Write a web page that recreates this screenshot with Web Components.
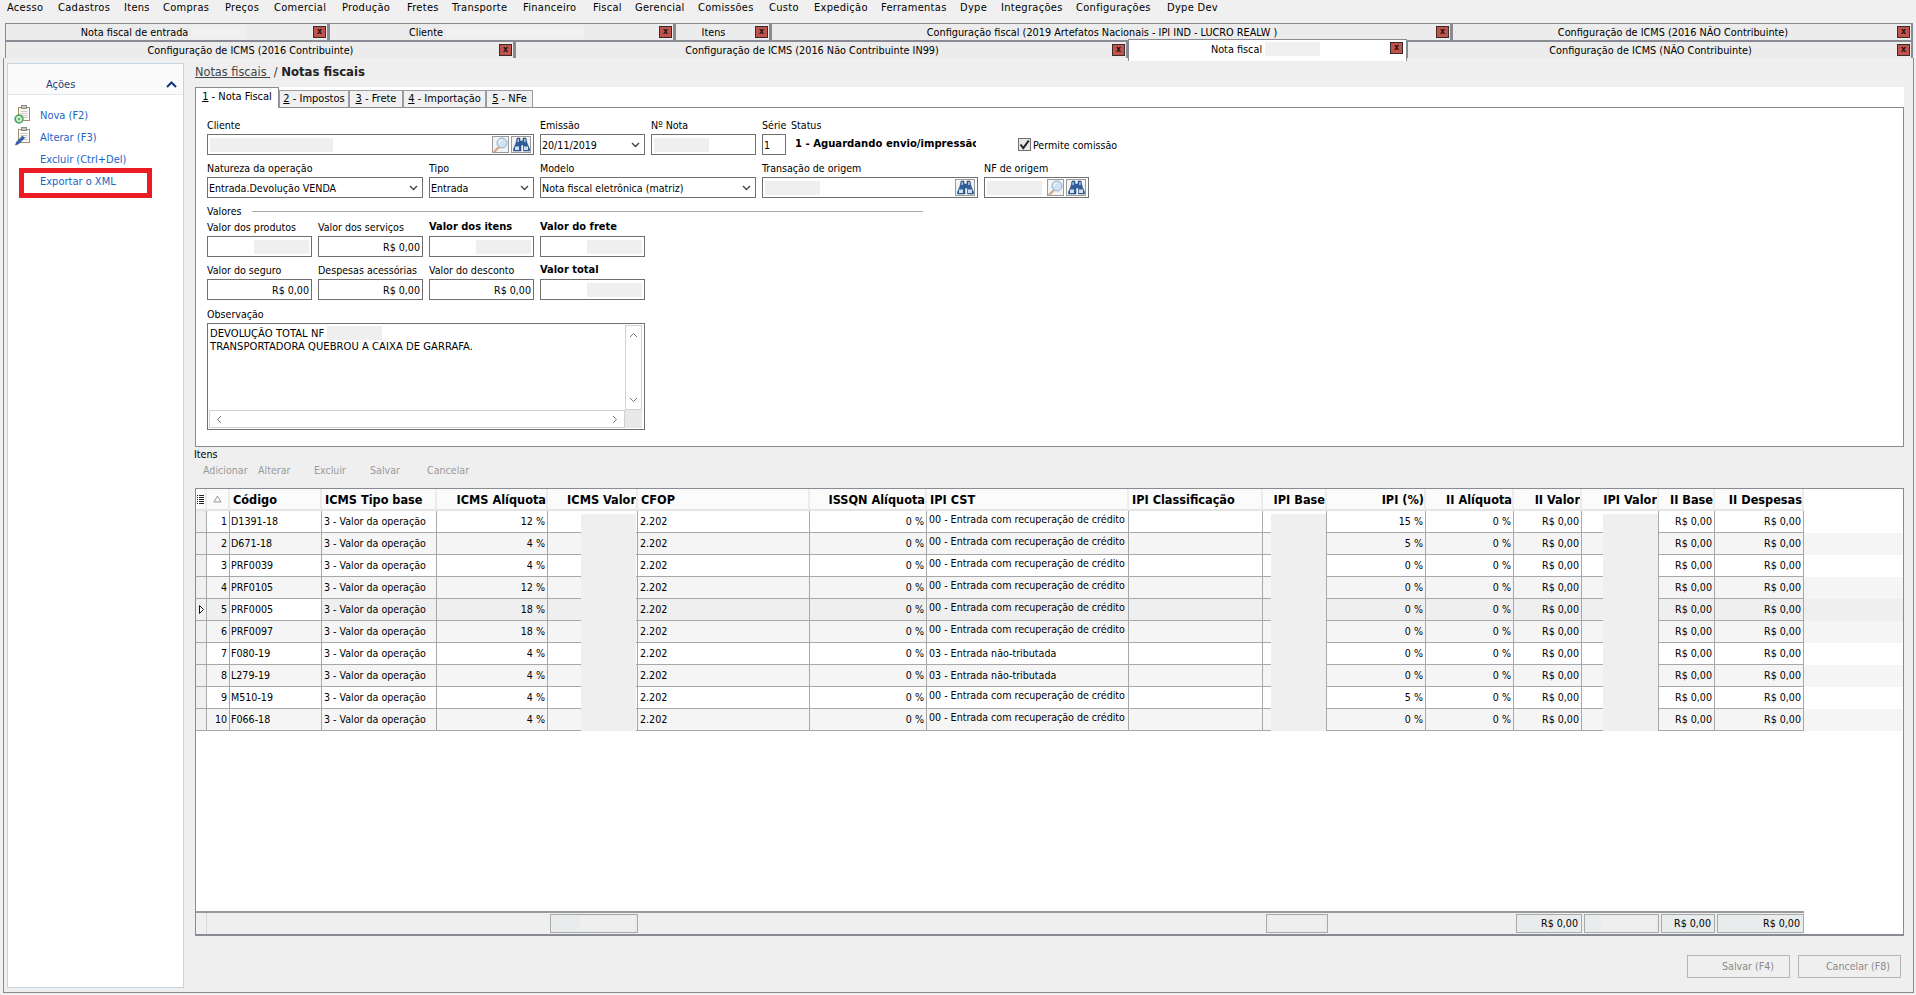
<!DOCTYPE html>
<html lang="pt-BR"><head><meta charset="utf-8"><title>Notas fiscais</title>
<style>
html,body{margin:0;padding:0;height:995px;overflow:hidden;background:#f0f0f0}
body{font:10.6px "DejaVu Sans Condensed","DejaVu Sans",sans-serif;color:#000}
</style></head><body>
<erp-app></erp-app>
<script>
const ICONS={
 search:'<svg width="15" height="16" viewBox="0 0 15 16"><path d="M6 10 1.500 14.500" stroke="#d8a88a" stroke-width="2.400" stroke-linecap="round"/><circle cx="9" cy="6" r="5" fill="#cfe3f3" stroke="#8fb0c8"/><path d="M6 6a3 3 0 0 1 3-3" stroke="#fff" fill="none" stroke-width="1.200"/></svg>',
 bino:'<svg width="17" height="15" viewBox="0 0 17 15"><path d="M4 1h3v3h3V1h3l1 5 2.500 6v2h-6V8H8v6H.5v-2L3 6z" fill="#2f5f99" stroke="#1c3f6e" stroke-width=".5"/><path d="M4.500 2h1.200v3H4.500zM11.300 2h1.200v3h-1.200zM2 9.500h4v3.500H2zM11 9.500h4v3.500h-4z" fill="#cfe0f2"/></svg>',
 chev:'<svg width="9" height="6" viewBox="0 0 9 6"><path d="M1 1l3.500 3.500L8 1" fill="none" stroke="#444" stroke-width="1.400"/></svg>',
 up:'<svg width="11" height="7" viewBox="0 0 11 7"><path d="M1 6l4.500-4.500L10 6" fill="none" stroke="#10367e" stroke-width="2"/></svg>',
 nova:'<svg width="17" height="19" viewBox="0 0 17 19"><rect x="4.500" y="2.500" width="11" height="13" fill="#fafaf6" stroke="#a58d69"/><path d="M6.500 6.500h7M6.500 8.500h7M6.500 10.500h7M6.500 12.500h7" stroke="#c8c8c8"/><rect x="7.500" y=".5" width="5" height="3" fill="#c4c4c4" stroke="#8c8c8c"/><circle cx="5" cy="14" r="3.800" fill="#eef6ee" stroke="#4da85c" stroke-width="1.800"/><path d="M3.300 14h3.400M5 12.300v3.400" stroke="#4da85c"/></svg>',
 alterar:'<svg width="17" height="19" viewBox="0 0 17 19"><rect x="4.500" y="2.500" width="11" height="13" fill="#fafaf6" stroke="#a58d69"/><path d="M6.500 6.500h7M6.500 8.500h7M6.500 10.500h7M6.500 12.500h7" stroke="#c8c8c8"/><rect x="7.500" y=".5" width="5" height="3" fill="#c4c4c4" stroke="#8c8c8c"/><path d="M1.500 18l1-3 6-6 2 2-6 6z" fill="#2b66b8" stroke="#173a70" stroke-width=".5"/></svg>',
 list:'<svg width="7" height="9" viewBox="0 0 7 9"><path d="M0 .5h1M2 .5h5M0 2.500h1M2 2.500h5M0 4.500h1M2 4.500h5M0 6.500h1M2 6.500h5M0 8.500h1M2 8.500h5" stroke="#222"/></svg>',
 tri:'<svg width="9" height="8" viewBox="0 0 9 8"><path d="M4.500 1 8 7H1z" fill="none" stroke="#999"/></svg>',
 cur:'<svg width="5" height="9" viewBox="0 0 5 9"><path d="M.5.500 4.500 4.500.5 8.500z" fill="#fff" stroke="#111"/></svg>',
 sU:'<svg width="9" height="6" viewBox="0 0 9 6"><path d="M1 5l3.500-3.500L8 5" fill="none" stroke="#777"/></svg>',
 sD:'<svg width="9" height="6" viewBox="0 0 9 6"><path d="M1 1l3.500 3.500L8 1" fill="none" stroke="#777"/></svg>',
 sL:'<svg width="6" height="9" viewBox="0 0 6 9"><path d="M5 1 1.500 4.500 5 8" fill="none" stroke="#777"/></svg>',
 sR:'<svg width="6" height="9" viewBox="0 0 6 9"><path d="M1 1l3.500 3.500L1 8" fill="none" stroke="#777"/></svg>',
 check:'<svg width="11" height="11" viewBox="0 0 11 11"><path d="M1.500 5.500 4.300 9 9.800 1.500" fill="none" stroke="#222" stroke-width="2"/></svg>'
};
class Base extends HTMLElement{
 render(html){ (this.shadowRoot||this.attachShadow({mode:'open'})).innerHTML=html; }
}
customElements.define('app-icon',class extends Base{connectedCallback(){
 this.render(`<style>:host{display:inline-flex;align-items:center;justify-content:center;line-height:0}</style>${ICONS[this.getAttribute('name')]||''}`);
}});

customElements.define('menu-bar',class extends Base{connectedCallback(){
 const it=[['Acesso',51],['Cadastros',66],['Itens',39],['Compras',62],['Preços',49],['Comercial',68],['Produção',65],['Fretes',45],['Transporte',71],['Financeiro',70],['Fiscal',42],['Gerencial',63],['Comissões',71],['Custo',45],['Expedição',67],['Ferramentas',79],['Dype',41],['Integrações',75],['Configurações',91],['Dype Dev',70]];
 this.render(`<style>:host{display:flex;height:23px;padding:0 0 0 7px;box-sizing:border-box;align-items:flex-start;font-size:11px}
 span{display:block;line-height:16px;white-space:nowrap;flex:none;letter-spacing:.3px}</style>${it.map(([t,w])=>`<span style="width:${w}px">${t}</span>`).join('')}`);
}});

customElements.define('doc-tab',class extends Base{connectedCallback(){
 const w=this.getAttribute('w'),m=this.getAttribute('mask'),act=this.hasAttribute('active');
 this.render(`<style>:host{display:flex;flex:none;box-sizing:border-box;width:${w}px;height:100%;position:relative;align-items:center;justify-content:center;font-size:10.8px;
  background:#ececec;border:1px solid #8a8a94;border-right-width:2px;padding-right:${this.getAttribute('pr')||18}px;white-space:nowrap}
 :host([active]){background:#fff;border-bottom:0;height:22px;margin-top:-2px;z-index:2;padding-bottom:3px;border-right-width:1px}
 i{display:block;height:14px;background:#f0f0f0;width:${m||0}px;margin-left:3px}
 b{position:absolute;right:${act?3:1}px;top:2px;box-sizing:border-box;width:13px;height:12px;background:#c0544c;border:1px solid #3a2a28;font:bold 9px/9px "DejaVu Sans Mono",monospace;text-align:center;color:#111}</style>
 <slot></slot>${m?'<i></i>':''}<b>x</b>`);
}});
customElements.define('doc-tabs',class extends Base{connectedCallback(){
 this.render(`<style>:host{display:block;padding-left:5px}
 div{display:flex;height:18px}</style>
 <div>
  <doc-tab w="324" mask="55" pr="6">Nota fiscal de entrada</doc-tab>
  <doc-tab w="346" mask="138" pr="10">Cliente</doc-tab>
  <doc-tab w="96">Itens</doc-tab>
  <doc-tab w="681">Configuração fiscal (2019 Artefatos Nacionais - IPI IND - LUCRO REALW )</doc-tab>
  <doc-tab w="461">Configuração de ICMS (2016 NÃO Contribuinte)</doc-tab>
 </div><div>
  <doc-tab w="510">Configuração de ICMS (2016 Contribuinte)</doc-tab>
  <doc-tab w="613">Configuração de ICMS (2016 Não Contribuinte IN99)</doc-tab>
  <doc-tab w="279" active mask="55" pr="4">Nota fiscal</doc-tab>
  <doc-tab w="506">Configuração de ICMS (NÃO Contribuinte)</doc-tab>
 </div>`);
}});

customElements.define('side-link',class extends Base{connectedCallback(){
 const ic=this.getAttribute('icon');
 this.render(`<style>:host{display:flex;height:22px;align-items:center;color:#1a64c8;position:relative;padding-left:32px;font-size:11px}
 app-icon{position:absolute;left:6px;top:1px}</style>${ic?`<app-icon name="${ic}"></app-icon>`:''}<slot></slot>`);
}});
customElements.define('side-panel',class extends Base{connectedCallback(){
 this.render(`<style>:host{display:block;flex:none;width:177px;height:925px;box-sizing:border-box;background:#fff;border:1px solid #c6d3e0;position:relative}
 header{height:31px;box-sizing:border-box;background:#fafafa;border-bottom:1px solid #e3e8ee;display:flex;align-items:center;justify-content:space-between;padding:10px 6px 0 38px;color:#1f3f78;font-size:11px}
 nav{padding-top:9px}
 .mark{position:absolute;left:11px;top:104px;width:133px;height:30px;box-sizing:border-box;border:5px solid #ed1c24}</style>
 <header><span>Ações</span><app-icon name="up"></app-icon></header>
 <nav><side-link icon="nova">Nova (F2)</side-link><side-link icon="alterar">Alterar (F3)</side-link><side-link>Excluir (Ctrl+Del)</side-link><side-link>Exportar o XML</side-link></nav>
 <div class="mark"></div>`);
}});

customElements.define('ui-field',class extends Base{connectedCallback(){
 const a=n=>this.getAttribute(n);
 const mask=a('mask'),val=a('value')||'',sel=this.hasAttribute('select');
 this.render(`<style>:host{display:block;flex:none;width:${a('w')}px}
 label{display:block;height:14px;line-height:14px;white-space:nowrap;${this.hasAttribute('bold')?'font-weight:bold;font-size:11px;':''}}
 .c{margin-top:2px;height:21px;box-sizing:border-box;border:1px solid #707070;background:#fff;display:flex;align-items:center;padding:0 2px 0 1px;gap:2px;white-space:nowrap;overflow:hidden}
 .v{flex:1;min-width:0;${a('ta')==='right'?'text-align:right;':''}}
 i{display:block;height:14px;width:${mask}px;background:#efefef;flex:none;margin-left:1px}
 :host([end]) i{margin-left:auto}
 ::slotted(icon-btn){flex:none}</style>
 <label>${a('label')}</label><div class="c" part="c">${mask?'<i></i>':''}${val||!mask?`<span class="v">${val}</span>`:''}${mask&&!this.hasAttribute('end')?'<span class="v"></span>':''}<slot></slot>${sel?`<app-icon name="chev" style="margin-right:2px"></app-icon>`:''}</div>`);
}});
customElements.define('icon-btn',class extends Base{connectedCallback(){
 const w=this.getAttribute('w')||17;
 this.render(`<style>:host{display:flex;width:${w}px;height:17px;box-sizing:border-box;border:1px solid #9a9a9a;background:#f4f4f4;align-items:center;justify-content:center}</style><app-icon name="${this.getAttribute('name')}"></app-icon>`);
}});

customElements.define('memo-box',class extends Base{connectedCallback(){
 this.render(`<style>:host{display:block}
 label{display:block;height:14px;line-height:14px}
 .b{margin-top:2px;height:107px;width:438px;box-sizing:border-box;border:1px solid #707070;background:#fff;display:grid;grid-template-columns:1fr 17px;grid-template-rows:1fr 18px;padding:1px 2px 1px 1px}
 .t{padding:1px 0 0 1px;line-height:13px;white-space:nowrap;display:block;font-size:11.1px;letter-spacing:.05px}
 .t i{display:inline-block;width:55px;height:14px;background:#efefef;vertical-align:-3px}
 .v,.h{display:flex;box-sizing:border-box;border:1px solid #d0d0d0;background:#fff;justify-content:space-between;align-items:center}
 .v{flex-direction:column;padding:6px 0 6px}.h{padding:0 6px}
 .k{background:#e8e8e8}</style>
 <label>Observação</label>
 <div class="b"><div class="t">DEVOLUÇÃO TOTAL NF <i></i><br>TRANSPORTADORA QUEBROU A CAIXA DE GARRAFA.</div>
 <div class="v"><app-icon name="sU"></app-icon><app-icon name="sD"></app-icon></div>
 <div class="h"><app-icon name="sL"></app-icon><app-icon name="sR"></app-icon></div><div class="k"></div></div>`);
}});

customElements.define('invoice-form',class extends Base{connectedCallback(){
 this.render(`<style>:host{display:block;height:340px;box-sizing:border-box;background:#fff;border:1px solid #8a8a94;padding:10px 0 0 11px}
 .r{display:flex;gap:6px;margin-top:6px;align-items:flex-start}
 .r.first{margin-top:0}.r.t{margin-top:2px}
 .sec{display:flex;align-items:center;margin-top:6px;height:14px;width:716px;gap:10px}
 .sec hr{flex:1;border:0;border-top:1px solid #a8a8a8;margin:0}
 .st{width:185px;flex:none;overflow:hidden}
 .st label{display:block;height:14px;line-height:14px}
 .st b{display:block;margin-top:3px;white-space:nowrap;overflow:hidden;padding-left:4px;width:185px;box-sizing:border-box;line-height:18px;font-size:11.2px}
 .chk{display:flex;align-items:center;margin:20px 0 0 36px;gap:2px;white-space:nowrap}
 .chk span{display:flex;width:13px;height:13px;box-sizing:border-box;border:1px solid #707070;background:#e8e8e8;align-items:center;justify-content:center}
 memo-box{margin-top:7px}</style>
 <div class="r first">
  <ui-field w="327" label="Cliente" mask="123"><icon-btn name="search"></icon-btn><icon-btn name="bino" w="20"></icon-btn></ui-field>
  <ui-field w="105" label="Emissão" value="20/11/2019" select></ui-field>
  <ui-field w="105" label="Nº Nota" mask="55"></ui-field>
  <ui-field w="24" label="Série" value="1" style="margin-right:-1px"></ui-field>
  <div class="st"><label>Status</label><b>1 - Aguardando envio/impressão</b></div>
  <div class="chk"><span><app-icon name="check"></app-icon></span>Permite comissão</div>
 </div>
 <div class="r">
  <ui-field w="216" label="Natureza da operação" value="Entrada.Devolução VENDA" select></ui-field>
  <ui-field w="105" label="Tipo" value="Entrada" select></ui-field>
  <ui-field w="216" label="Modelo" value="Nota fiscal eletrônica (matriz)" select></ui-field>
  <ui-field w="216" label="Transação de origem" mask="55"><icon-btn name="bino" w="20"></icon-btn></ui-field>
  <ui-field w="105" label="NF de origem" mask="55"><icon-btn name="search"></icon-btn><icon-btn name="bino" w="20"></icon-btn></ui-field>
 </div>
 <div class="sec"><span>Valores</span><hr></div>
 <div class="r t">
  <ui-field w="105" label="Valor dos produtos" mask="55" end></ui-field>
  <ui-field w="105" label="Valor dos serviços" value="R$ 0,00" ta="right"></ui-field>
  <ui-field w="105" label="Valor dos itens" bold mask="55" end></ui-field>
  <ui-field w="105" label="Valor do frete" bold mask="55" end></ui-field>
 </div>
 <div class="r">
  <ui-field w="105" label="Valor do seguro" value="R$ 0,00" ta="right"></ui-field>
  <ui-field w="105" label="Despesas acessórias" value="R$ 0,00" ta="right"></ui-field>
  <ui-field w="105" label="Valor do desconto" value="R$ 0,00" ta="right"></ui-field>
  <ui-field w="105" label="Valor total" bold mask="55" end></ui-field>
 </div>
 <memo-box></memo-box>`);
}});

customElements.define('data-grid',class extends Base{connectedCallback(){
 const cols='11px 23px 92px 115px 111px 90px 172px 117px 202px 134px 64px 99px 88px 68px 77px 56px 89px';
 const heads=[['',0],['',0],['Código',0],['ICMS Tipo base',0],['ICMS Alíquota',1],['ICMS Valor',1],['CFOP',0],['ISSQN Alíquota',1],['IPI CST',0],['IPI Classificação',0],['IPI Base',1],['IPI (%)',1],['II Alíquota',1],['II Valor',1],['IPI Valor',1],['II Base',1],['II Despesas',1]];
 const codes=['D1391-18','D671-18','PRF0039','PRF0105','PRF0005','PRF0097','F080-19','L279-19','M510-19','F066-18'];
 const ic=[12,4,4,12,18,18,4,4,4,4],ip=[15,5,0,0,0,0,0,0,5,0];
 const R='R$ 0,00';
 const row=(i)=>{
  const cst=(i==6||i==7)?'<div class="c">03 - Entrada não-tributada</div>':'<div class="c up">00 - Entrada com recuperação de crédito</div>';
  const cls=i==4?'row sel':(i%2||i==5?'row alt':'row');
  return `<div class="${cls}"><div class="c ind">${i==4?'<app-icon name="cur"></app-icon>':''}</div><div class="c r">${i+1}</div><div class="c code">${codes[i]}</div><div class="c">3 - Valor da operação</div><div class="c r">${ic[i]} %</div><div class="c r"></div><div class="c">2.202</div><div class="c r">0 %</div>${cst}<div class="c"></div><div class="c r"></div><div class="c r">${ip[i]} %</div><div class="c r">0 %</div><div class="c r">${R}</div><div class="c r"></div><div class="c r">${R}</div><div class="c r">${R}</div></div>`;
 };
 this.render(`<style>:host{display:flex;flex-direction:column;height:448px;box-sizing:border-box;border:1px solid #8a8a94;border-bottom-width:2px;background:#fff;position:relative}
 .head,.row,.foot{display:grid;grid-template-columns:${cols};justify-content:start}
 .head{height:22px;background:#fff}
 .h{box-sizing:border-box;background:#fbfbfb;border-right:2px solid #ececec;border-bottom:2px solid #e4e4e4;font-weight:bold;font-size:12.6px;line-height:19px;padding:0 3px;white-space:nowrap;overflow:hidden;display:flex;align-items:center}
 .h.r{justify-content:flex-end;padding-right:0}
 .h.i{padding:0;justify-content:center}
 .row{height:22px;background:#fff}.row.alt{background:#f5f5f5}.row.sel{background:#efefef}
 .row.sel .code{background:#fff}
 .c{box-sizing:border-box;border-right:1px solid #a8a8a8;border-bottom:1px solid #a8a8a8;padding:0 2px 0 2px;line-height:21px;white-space:nowrap;overflow:hidden}
 .c.r{text-align:right;padding-right:2px}.c.up{line-height:17px}.c.code{padding-left:1px}
 .c.ind{background:#f0f0f0;padding:0;display:flex;align-items:center;justify-content:center}
 .sp{flex:1}
 .foot{height:23px;box-sizing:border-box;border-top:2px solid #999;background:#efefef;width:1608px;padding-top:1px}
 .foot>div{box-sizing:border-box;height:19px}
 .b{border:1px solid #aaa;background:#e8ecec;text-align:right;padding-right:3px;line-height:17px;margin-left:2px;position:relative}
 .foot .l{border-right:1px solid #d8d8d8;height:21px;margin-top:-1px}
 .b i{position:absolute;right:2px;top:1px;height:14px;background:#efefef}
 .mask{position:absolute;top:25px;width:55px;height:217px;background:#efefef}</style>
 <div class="head">${heads.map(([t,r],k)=>k==0?`<div class="h i"><app-icon name="list"></app-icon></div>`:k==1?`<div class="h i"><app-icon name="tri"></app-icon></div>`:`<div class="h ${r?'r':''}">${t}</div>`).join('')}</div>
 ${codes.map((_,i)=>row(i)).join('')}
 <div class="sp"></div>
 <div class="foot"><div class="l"></div><div></div><div></div><div></div><div></div>
  <div class="b"><i style="width:55px"></i></div><div></div><div></div><div></div><div></div>
  <div class="b" style="margin-left:3px;margin-right:-1px"><i style="width:55px"></i></div><div></div><div></div>
  <div class="b">${R}</div><div class="b"><i style="width:55px"></i></div><div class="b">${R}</div><div class="b">${R}</div></div>
 <div class="mask" style="left:385px"></div><div class="mask" style="left:1075px"></div><div class="mask" style="left:1407px"></div>`);
}});

customElements.define('page-tabs',class extends Base{connectedCallback(){
 const t=[['1',' - Nota Fiscal',84,1],['2',' - Impostos',70],['3',' - Frete',54],['4',' - Importação',83],['5',' - NFe',47]];
 this.render(`<style>:host{display:flex;height:20px;background:#fff;align-items:flex-end}
 span{display:block;box-sizing:border-box;background:#f0f0f0;border:1px solid #9a9aa2;border-bottom:0;height:17px;line-height:16px;text-align:center;white-space:nowrap;font-size:11px}
 span.a{background:#fff;height:21px;line-height:18px;margin-bottom:-1px;position:relative;z-index:1;border-color:#8a8a94;padding-bottom:2px}
 u{text-decoration:underline}</style>
 ${t.map(([n,l,w,a])=>`<span class="${a?'a':''}" style="width:${w}px"><u>${n}</u>${l}</span>`).join('')}`);
}});

customElements.define('content-area',class extends Base{connectedCallback(){
 this.render(`<style>:host{display:flex;flex-direction:column;width:1709px;flex:none}
 .bc{height:24px;box-sizing:border-box;font-size:12.6px;line-height:17px;white-space:nowrap;color:#333}
 .bc u{color:#444}.bc b{color:#222;font-size:13px}
 .it{height:14px;line-height:14px;margin-top:0;margin-left:-1px}
 .tb{display:flex;height:16px;line-height:16px;margin:1px 0 10px 8px;color:#9a9a9a}
 .tb span{flex:none}
 .ft{display:flex;justify-content:flex-end;gap:8px;margin-top:19px;padding-right:3px}
 .ft span{display:block;width:103px;height:23px;box-sizing:border-box;border:1px solid #b4b4b4;line-height:21px;text-align:right;padding-right:15px;color:#8a8a8a}
 .ft span+span{padding-right:10px}</style>
 <div class="bc"><u>Notas fiscais&nbsp;</u> / <b>Notas fiscais</b></div>
 <page-tabs></page-tabs>
 <invoice-form></invoice-form>
 <div class="it">Itens</div>
 <div class="tb"><span style="width:55px">Adicionar</span><span style="width:56px">Alterar</span><span style="width:56px">Excluir</span><span style="width:57px">Salvar</span><span>Cancelar</span></div>
 <data-grid></data-grid>
 <div class="ft"><span>Salvar (F4)</span><span>Cancelar (F8)</span></div>`);
}});

customElements.define('erp-app',class extends Base{connectedCallback(){
 this.render(`<style>:host{display:block;height:995px;background:#f0f0f0}
 main{display:flex;box-sizing:border-box;height:935px;margin:-1px 2px 0 3px;border:1px solid #8a8a94;border-top:0;padding:5px 0 0 3px;gap:11px;background:#efefef;position:relative}</style>
 <menu-bar></menu-bar><doc-tabs></doc-tabs>
 <main><side-panel></side-panel><content-area></content-area></main>`);
}});
</script>
</body></html>
